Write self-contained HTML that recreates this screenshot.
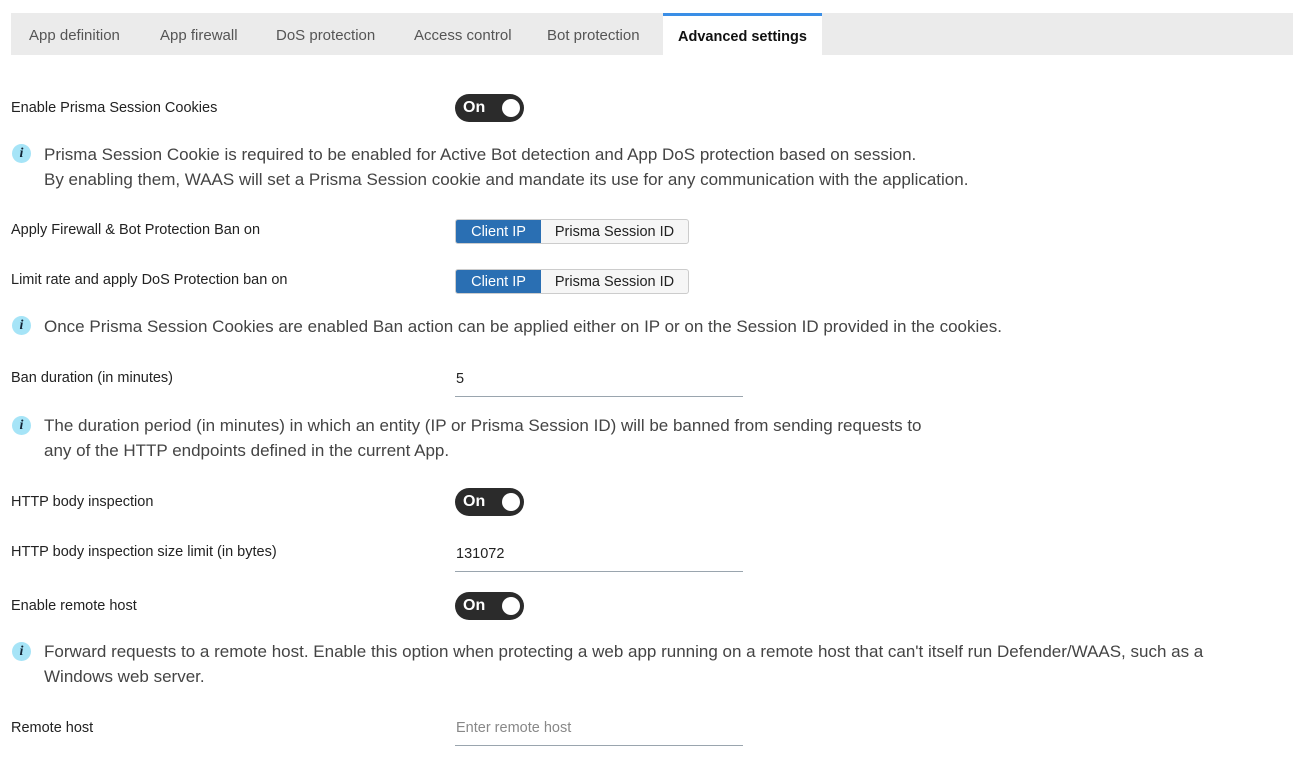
<!DOCTYPE html>
<html><head><meta charset="utf-8"><style>
body{margin:0;width:1307px;height:758px;background:#fff;font-family:"Liberation Sans",sans-serif;color:#222;position:relative;overflow:hidden}
.a{position:absolute;white-space:nowrap}
.tabs{position:absolute;left:11px;top:13px;width:1282px;height:42px;background:#ebebeb}
.tab{position:absolute;top:0;height:42px;line-height:46px;font-size:15px;color:#555}
.tab.act{background:#fff;color:#111;font-weight:bold;border-top:3px solid #3a8ee6;height:39px;line-height:42px;text-align:center;font-size:14.5px}
.lbl{font-size:14.5px;color:#222}
.tog{position:absolute;width:69px;height:28px;border-radius:14px;background:#2b2b2b}
.tog span{position:absolute;left:8px;top:5px;color:#fff;font-size:16px;font-weight:bold}
.tog i{position:absolute;right:4px;top:5px;width:18px;height:18px;border-radius:50%;background:#fff}
.info{font-size:17px;color:#444;line-height:25px;white-space:normal}
.ic{position:absolute;width:19px;height:19px;border-radius:50%;background:#a6e4f7;color:#123;font:italic bold 14px "Liberation Serif",serif;text-align:center;line-height:19px}
.seg{position:absolute;left:455px;width:232px;height:23px;border:1px solid #ccc;border-radius:3px;background:#f6f6f6;font-size:14.5px;overflow:hidden}
.seg b{position:absolute;left:0;top:0;width:85px;height:23px;background:#2a6fb3;color:#fff;font-weight:normal;text-align:center;line-height:25px}
.seg span{position:absolute;left:85px;width:147px;text-align:center;line-height:25px;color:#222}
.inp{position:absolute;left:455px;width:288px;border-bottom:1px solid #9aa5ae;height:30px;font-size:14.5px}
.inp span{position:absolute;left:1px;top:5px}
</style></head><body>
<div class="tabs">
<div class="tab" style="left:18px">App definition</div>
<div class="tab" style="left:149px">App firewall</div>
<div class="tab" style="left:265px">DoS protection</div>
<div class="tab" style="left:403px">Access control</div>
<div class="tab" style="left:536px">Bot protection</div>
<div class="tab act" style="left:652px;width:159px">Advanced settings</div>
</div>

<div class="a lbl" style="left:11px;top:100px">Enable Prisma Session Cookies</div>
<div class="tog" style="left:455px;top:94px"><span>On</span><i></i></div>

<div class="ic" style="left:12px;top:144px">i</div>
<div class="a info" style="left:44px;top:142px;width:1240px">Prisma Session Cookie is required to be enabled for Active Bot detection and App DoS protection based on session.<br>By enabling them, WAAS will set a Prisma Session cookie and mandate its use for any communication with the application.</div>

<div class="a lbl" style="left:11px;top:222px">Apply Firewall &amp; Bot Protection Ban on</div>
<div class="seg" style="top:219px"><b>Client IP</b><span>Prisma Session ID</span></div>
<div class="a lbl" style="left:11px;top:272px">Limit rate and apply DoS Protection ban on</div>
<div class="seg" style="top:269px"><b>Client IP</b><span>Prisma Session ID</span></div>

<div class="ic" style="left:12px;top:316px">i</div>
<div class="a info" style="left:44px;top:314px">Once Prisma Session Cookies are enabled Ban action can be applied either on IP or on the Session ID provided in the cookies.</div>

<div class="a lbl" style="left:11px;top:370px">Ban duration (in minutes)</div>
<div class="inp" style="top:366px"><span>5</span></div>

<div class="ic" style="left:12px;top:416px">i</div>
<div class="a info" style="left:44px;top:413px;width:1240px">The duration period (in minutes) in which an entity (IP or Prisma Session ID) will be banned from sending requests to<br>any of the HTTP endpoints defined in the current App.</div>

<div class="a lbl" style="left:11px;top:494px">HTTP body inspection</div>
<div class="tog" style="left:455px;top:488px"><span>On</span><i></i></div>

<div class="a lbl" style="left:11px;top:544px">HTTP body inspection size limit (in bytes)</div>
<div class="inp" style="top:541px"><span>131072</span></div>

<div class="a lbl" style="left:11px;top:598px">Enable remote host</div>
<div class="tog" style="left:455px;top:592px"><span>On</span><i></i></div>

<div class="ic" style="left:12px;top:642px">i</div>
<div class="a info" style="left:44px;top:639px;width:1240px">Forward requests to a remote host. Enable this option when protecting a web app running on a remote host that can't itself run Defender/WAAS, such as a<br>Windows web server.</div>

<div class="a lbl" style="left:11px;top:720px">Remote host</div>
<div class="inp" style="top:715px"><span style="color:#888">Enter remote host</span></div>
</body></html>
